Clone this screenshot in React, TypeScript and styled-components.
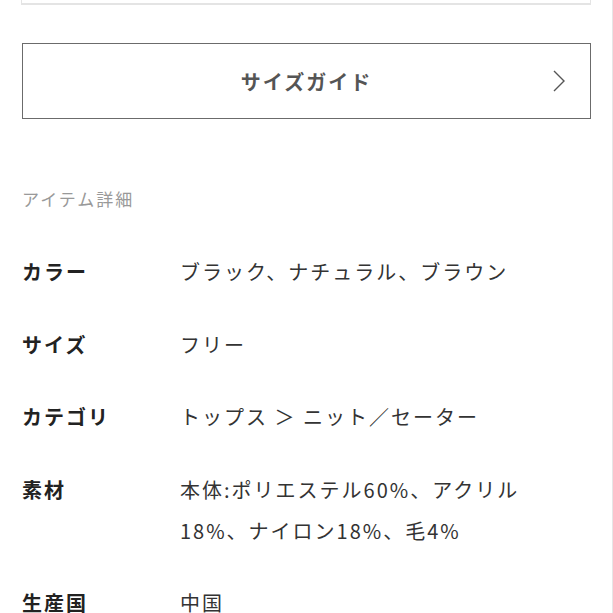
import React from "react";
import styled, { createGlobalStyle } from "styled-components";

const GlobalStyle = createGlobalStyle`
  html, body {
    margin: 0;
    padding: 0;
    background: #ffffff;
  }
  body {
    font-family: "Noto Sans CJK JP", "Noto Sans", sans-serif;
    -webkit-font-smoothing: antialiased;
  }
`;

const Page = styled.div`
  width: 613px;
  height: 613px;
  box-sizing: border-box;
  padding: 0 21px 0 22px;
  overflow: hidden;
  border-right: 1px solid #e6e6e6;
`;

const TopBox = styled.div`
  height: 3px;
  border: 1px solid #e4e4e4;
  border-top: none;
  border-bottom-width: 2px;
  margin-left: -1px;
`;

const GuideButton = styled.button`
  margin-top: 38px;
  height: 76px;
  width: 100%;
  box-sizing: border-box;
  border: 1.5px solid #6b6b6b;
  background: #ffffff;
  display: flex;
  align-items: center;
  justify-content: center;
  position: relative;
  padding: 0;
  font-family: "Noto Sans CJK JP", sans-serif;
  font-size: 20px;
  font-weight: 700;
  letter-spacing: 2px;
  color: #555555;
`;

const Chevron = styled.svg`
  position: absolute;
  right: 24px;
  top: 50%;
  transform: translateY(-50%);
`;

const SectionTitle = styled.div`
  margin-top: 68px;
  font-size: 17px;
  line-height: 24px;
  letter-spacing: 2px;
  color: #999999;
`;

const SpecList = styled.dl`
  margin: 40px 0 0;
  display: flex;
  flex-direction: column;
  gap: 31.5px;
`;

const SpecRow = styled.div`
  display: grid;
  grid-template-columns: 158px 370px;
  font-size: 20px;
  line-height: 41px;
  letter-spacing: 2px;
`;

const Label = styled.dt`
  margin: 0;
  font-weight: 700;
  color: #222222;
`;

const Value = styled.dd`
  margin: 0;
  color: #333333;
`;

const specs: { label: string; value: string }[] = [
  { label: "カラー", value: "ブラック、ナチュラル、ブラウン" },
  { label: "サイズ", value: "フリー" },
  { label: "カテゴリ", value: "トップス ＞ ニット／セーター" },
  { label: "素材", value: "本体:ポリエステル60%、アクリル18%、ナイロン18%、毛4%" },
  { label: "生産国", value: "中国" },
];

export default function App() {
  return (
    <>
      <GlobalStyle />
      <Page>
        <TopBox />
        <GuideButton type="button">
          サイズガイド
          <Chevron width="14" height="24" viewBox="0 0 14 24" fill="none">
            <polyline
              points="2,2 12,12 2,22"
              stroke="#555555"
              strokeWidth="1.4"
              strokeLinejoin="miter"
            />
          </Chevron>
        </GuideButton>
        <SectionTitle>アイテム詳細</SectionTitle>
        <SpecList>
          {specs.map((s) => (
            <SpecRow key={s.label}>
              <Label>{s.label}</Label>
              <Value>{s.value}</Value>
            </SpecRow>
          ))}
        </SpecList>
      </Page>
    </>
  );
}
